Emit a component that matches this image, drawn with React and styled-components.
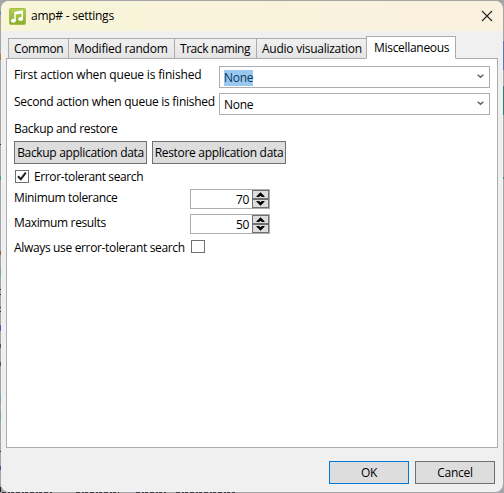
import React from "react";
import styled, { createGlobalStyle } from "styled-components";

const Global = createGlobalStyle`
  * { box-sizing: border-box; }
  html, body { margin: 0; padding: 0; overflow: hidden; }
  body { font: 12px/16px "Open Sans", "Noto Sans", sans-serif; color: #000; background: #a5a4a6; }
`;

const Desktop = styled.div`
  position: relative;
  width: 504px;
  height: 493px;
  padding: 1px;
  background: #a5a4a6;
  overflow: hidden;
`;

const Backdrop = styled.svg`
  position: absolute;
  inset: 0;
`;

const Window = styled.div`
  position: relative;
  display: flex;
  flex-direction: column;
  width: 502px;
  height: 491px;
  border-radius: 8px;
  overflow: hidden;
  background: #f0f0f0;
`;

const TitleBar = styled.header`
  display: flex;
  align-items: center;
  height: 30px;
  padding: 0 10px 0 8px;
  background: linear-gradient(90deg, #f8f5d8, #faf1df);
`;

const Text = styled.span`
  white-space: nowrap;
  letter-spacing: ${(p) => p.$ls ?? -0.3}px;
`;

const Title = styled(Text)`
  flex: 1;
  margin-left: 5px;
`;

const Tabs = styled.nav`
  display: flex;
  align-items: flex-end;
  height: 28px;
  padding-left: 7px;
  margin-bottom: -1px;
  position: relative;
`;

const Tab = styled.div`
  display: flex;
  align-items: center;
  width: ${(p) => p.$w}px;
  height: ${(p) => (p.$active ? 23 : 21)}px;
  padding-left: ${(p) => (p.$active ? 7 : 5)}px;
  padding-top: ${(p) => (p.$active ? 1 : 0)}px;
  margin-right: -1px;
  border: 1px solid #acacac;
  border-bottom-color: ${(p) => (p.$active ? "#fff" : "#acacac")};
  background: ${(p) => (p.$active ? "#fff" : "linear-gradient(#f0f0f0, #e5e5e5)")};
`;

const Panel = styled.main`
  height: 390px;
  margin: 0 5px;
  padding: 7px 7px 0;
  border: 1px solid #acacac;
  background: #fff;
`;

const Row = styled.div`
  display: flex;
  align-items: flex-start;
  height: ${(p) => p.$h}px;
`;

const Caption = styled.div`
  width: ${(p) => p.$w}px;
  height: ${(p) => p.$h}px;
  line-height: ${(p) => p.$h}px;
`;

const Combo = styled.div`
  display: flex;
  align-items: center;
  justify-content: space-between;
  width: 271px;
  height: 22px;
  padding: 1px 5px 0 4px;
  border: 1px solid #abadb3;
  background: #fff;

  svg {
    margin-bottom: 2px;
  }
`;

const Value = styled(Text)`
  line-height: 16px;
  color: ${(p) => (p.$selected ? "#0b3a63" : "#000")};
  background: ${(p) => (p.$selected ? "#99c9ef" : "none")};
`;

const Button = styled.div`
  display: flex;
  align-items: center;
  justify-content: center;
  width: ${(p) => p.$w}px;
  height: 23px;
  border: 1px solid ${(p) => (p.$primary ? "#0078d7" : "#707070")};
  background: #ddd;
`;

const ButtonRow = styled(Row)`
  gap: 5px;
`;

const CheckRow = styled(Row)`
  align-items: center;
  height: 17px;
  margin-bottom: 4px;
  gap: 5px;
  padding-left: 1px;
`;

const Check = styled.div`
  display: flex;
  width: 14px;
  height: 13px;
  margin: ${(p) => p.$margin || 0};
  border: 1px solid #707070;
  background: #fff;
`;

const Spinner = styled.div`
  display: flex;
  width: 80px;
  height: 20px;
  border: 1px solid #abadb3;
`;

const Amount = styled(Text)`
  flex: 1;
  padding-right: 3px;
  text-align: right;
  line-height: 20px;
`;

const Steppers = styled.div`
  display: grid;
  grid-template-rows: 9px 9px;
  width: 17px;
`;

const Step = styled.div`
  display: flex;
  align-items: center;
  justify-content: center;
  border: 1px solid #707070;
  background: #ddd;
`;

const Footer = styled.footer`
  display: flex;
  justify-content: flex-end;
  gap: 6px;
  padding: 13px 8px 0 0;
`;

const MusicIcon = () => (
  <svg width="17" height="17" viewBox="0 0 17 17">
    <defs>
      <linearGradient id="leaf" x2="0" y2="1">
        <stop stopColor="#b5cf55" />
        <stop offset="1" stopColor="#8bad2c" />
      </linearGradient>
    </defs>
    <rect x=".5" y=".5" width="16" height="16" rx="1" fill="url(#leaf)" stroke="#a5c044" />
    <path d="M5.3 3.8 14 2.3V11a2.4 1.9 0 1 1-1.5-1.7V5.6L6.8 6.5v6.2a2.4 1.9 0 1 1-1.5-1.7Z" fill="#fff" />
  </svg>
);

const Close = () => (
  <svg width="12" height="12" viewBox="0 0 12 12">
    <path d="M1 1 11 11M11 1 1 11" stroke="#222" strokeWidth="1.1" />
  </svg>
);

const Chevron = () => (
  <svg width="7" height="5" viewBox="0 0 7 5">
    <path d="M.7.7 3.5 3.3 6.3.7" fill="none" stroke="#606060" strokeWidth="1.5" />
  </svg>
);

const Arrow = ({ down }) => (
  <svg width="9" height="5" viewBox="0 0 9 5">
    <path
      d={down ? "M.5 0H3.2L4.5 1.2 5.8 0H8.5V.8L4.5 4.7.5.8Z" : "M.5 5H3.2L4.5 3.8 5.8 5H8.5V4.2L4.5.3.5 4.2Z"}
      fill="#000"
    />
  </svg>
);

const Tick = () => (
  <svg width="12" height="11" viewBox="0 0 12 11">
    <path d="M2 5.2 4.8 8.2 9.8 1.7" fill="none" stroke="#212121" strokeWidth="2" />
  </svg>
);

const tabs = [
  ["Common", 61, -0.4],
  ["Modified random", 107, -0.25],
  ["Track naming", 83, -0.45],
  ["Audio visualization", 111, -0.25],
  ["Miscellaneous", 90, -0.3],
];

// Slivers of the windows behind the dialog: [x, y, width, height, colour]
const slivers = [
  [0, 11, 1, 4, "#4d93c4"],
  [0, 54, 1, 6, "#a97a4e"],
  [0, 144, 1, 1, "#333"],
  [0, 176, 1, 4, "#4b9a9d"],
  [0, 251, 1, 4, "#8a6238"],
  [0, 268, 1, 9, "#78a3b0"],
  [0, 289, 1, 1, "#333"],
  [0, 294, 1, 1, "#333"],
  [0, 307, 1, 1, "#333"],
  [0, 311, 1, 1, "#333"],
  [0, 325, 1, 6, "#4560a0"],
  [0, 344, 1, 4, "#584f6d"],
  [0, 362, 1, 4, "#584f6d"],
  [0, 394, 1, 9, "#78a3b0"],
  [0, 412, 1, 9, "#78a3b0"],
  [0, 437, 1, 1, "#b1884e"],
  [0, 451, 1, 1, "#222"],
  [0, 466, 1, 4, "#474f85"],
  [0, 487, 1, 5, "#222"],
  [503, 41, 1, 29, "#6275ae"],
  [503, 86, 1, 29, "#2c7d77"],
  [503, 177, 1, 2, "#2c7d77"],
];

const NumberField = ({ value }) => (
  <Spinner>
    <Amount>{value}</Amount>
    <Steppers>
      <Step><Arrow /></Step>
      <Step><Arrow down /></Step>
    </Steppers>
  </Spinner>
);

export default function App() {
  return (
    <Desktop>
      <Global />
      <Backdrop width="504" height="493">
        {slivers.map(([x, y, w, h, fill]) => (
          <rect key={`${x}-${y}`} x={x} y={y} width={w} height={h} fill={fill} />
        ))}
        <path d="M2 492.5H53M76 492.5H119M136 492.5H166M176 492.5H235" stroke="#3c3c42" strokeDasharray="4 2 2 1 3 2" />
      </Backdrop>
      <Window>
        <TitleBar>
          <MusicIcon />
          <Title $ls={-0.25}>amp# - settings</Title>
          <Close />
        </TitleBar>
        <Tabs>
          {tabs.map(([name, w, ls]) => (
            <Tab key={name} $w={w} $active={name === "Miscellaneous"}>
              <Text $ls={ls}>{name}</Text>
            </Tab>
          ))}
        </Tabs>
        <Panel>
          <Row $h={27}>
            <Caption $w={205} $h={17}><Text $ls={-0.18}>First action when queue is finished</Text></Caption>
            <Combo><Value $selected>None</Value><Chevron /></Combo>
          </Row>
          <Row $h={27}>
            <Caption $w={205} $h={17}><Text $ls={-0.27}>Second action when queue is finished</Text></Caption>
            <Combo><Value>None</Value><Chevron /></Combo>
          </Row>
          <Row $h={21}>
            <Caption $h={18}><Text $ls={-0.33}>Backup and restore</Text></Caption>
          </Row>
          <ButtonRow $h={27}>
            <Button $w={133}><Text $ls={-0.32}>Backup application data</Text></Button>
            <Button $w={134}><Text>Restore application data</Text></Button>
          </ButtonRow>
          <CheckRow>
            <Check><Tick /></Check>
            <Text $ls={-0.38}>Error-tolerant search</Text>
          </CheckRow>
          <Row $h={25}>
            <Caption $w={176} $h={18}><Text $ls={-0.36}>Minimum tolerance</Text></Caption>
            <NumberField value="70" />
          </Row>
          <Row $h={25}>
            <Caption $w={176} $h={18}><Text $ls={-0.36}>Maximum results</Text></Caption>
            <NumberField value="50" />
          </Row>
          <Row $h={20}>
            <Caption $w={177} $h={18}><Text $ls={-0.34}>Always use error-tolerant search</Text></Caption>
            <Check $margin="1px 0 0" />
          </Row>
        </Panel>
        <Footer>
          <Button $w={80} $primary><Text>OK</Text></Button>
          <Button $w={80}><Text>Cancel</Text></Button>
        </Footer>
      </Window>
    </Desktop>
  );
}
